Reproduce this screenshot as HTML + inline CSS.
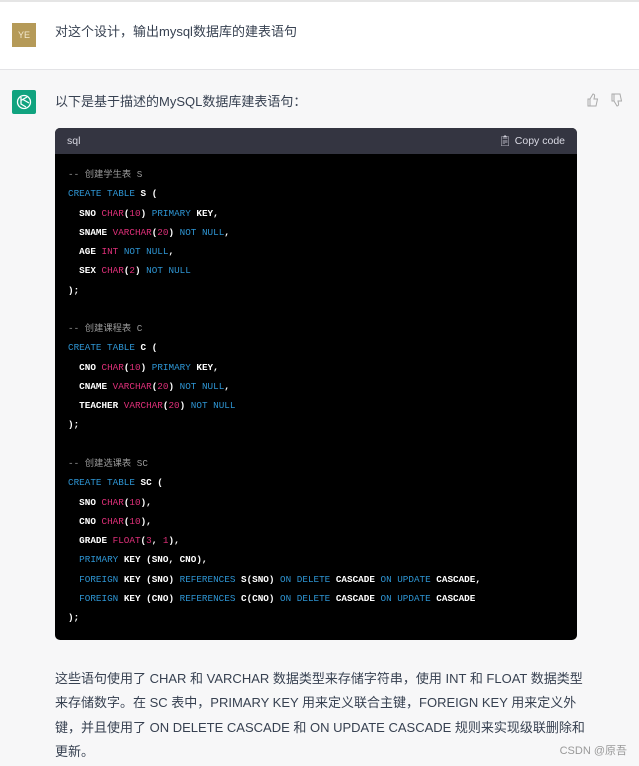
<!DOCTYPE html>
<html><head><meta charset="utf-8"><style>
*{margin:0;padding:0;box-sizing:border-box}
body{width:639px;height:766px;overflow:hidden;font-family:"Liberation Sans","Noto Sans CJK SC",sans-serif;color:#374151;background:#f7f7f8;position:relative}
.top{position:absolute;left:0;top:0;width:639px;height:70px;background:#fff;border-top:2px solid #e5e5e5;border-bottom:1px solid #e3e3e6}
.ye{position:absolute;left:12px;top:21px;width:24px;height:24px;background:#b59a58;color:#f3e9cf;font-size:9px;text-align:center;line-height:24px}
.q{position:absolute;left:55px;top:19px;font-size:13px;color:#374151}
.gpt{position:absolute;left:12px;top:90px;width:24px;height:24px;background:#10a37f;border-radius:2px}
.a1{position:absolute;left:55px;top:91px;font-size:13px}
.code{position:absolute;left:55px;top:128px;width:522px;height:512px;background:#000;border-radius:5px;overflow:hidden}
.hd{height:26px;background:#343541;color:#d9d9e3;font-size:10.5px;line-height:26px;padding-left:12px;position:relative}
.hd span{position:absolute;right:12px;top:0}
pre{font-family:"Liberation Mono",monospace;font-size:9.3px;line-height:19.27px;color:#fff;padding:11px 0 0 13px;font-weight:bold}
.k{color:#2e95d3;font-weight:normal}.t{color:#df3079;font-weight:normal}.c{color:#999;font-weight:normal}
.txt{position:absolute;left:55px;top:667px;width:530px;font-size:13px;line-height:24.3px;color:#374151}
.csdn{position:absolute;right:12px;top:742px;font-size:11px;color:#999}
</style></head><body>
<div class="top"><div class="ye">YE</div><div class="q">对这个设计，输出mysql数据库的建表语句</div></div>
<div class="gpt"><svg width="24" height="24" viewBox="0 0 24 24"><g fill="none" stroke="#fff" stroke-width="1.3"><circle cx="12" cy="12" r="6.5"/><path d="M9 7v7l5 3M15 7l-6 3.5v3M17 13l-6-3.5"/></g></svg></div>
<div class="a1">以下是基于描述的MySQL数据库建表语句：</div>
<svg style="position:absolute;left:586px;top:93px" width="40" height="14" viewBox="0 0 40 14"><g fill="none" stroke="#aaa" stroke-width="1"><path d="M2 6h2v7H2zM4 6l3-5c1 0 2 1 1.5 2.5L8 6h3.5l-1.5 7H4"/><path d="M26 8h2V1h-2zM28 8l3 5c1 0 2-1 1.5-2.5L32 8h3.5L34 1h-6"/></g></svg>
<div class="code"><div class="hd">sql<span>&#x1F4CB;&#xFE0E; Copy code</span></div>
<pre><span class="c">-- 创建学生表 S</span>
<span class="k">CREATE TABLE</span> S (
  SNO <span class="t">CHAR</span>(<span class="t">10</span>) <span class="k">PRIMARY</span> KEY,
  SNAME <span class="t">VARCHAR</span>(<span class="t">20</span>) <span class="k">NOT NULL</span>,
  AGE <span class="t">INT</span> <span class="k">NOT NULL</span>,
  SEX <span class="t">CHAR</span>(<span class="t">2</span>) <span class="k">NOT NULL</span>
);

<span class="c">-- 创建课程表 C</span>
<span class="k">CREATE TABLE</span> C (
  CNO <span class="t">CHAR</span>(<span class="t">10</span>) <span class="k">PRIMARY</span> KEY,
  CNAME <span class="t">VARCHAR</span>(<span class="t">20</span>) <span class="k">NOT NULL</span>,
  TEACHER <span class="t">VARCHAR</span>(<span class="t">20</span>) <span class="k">NOT NULL</span>
);

<span class="c">-- 创建选课表 SC</span>
<span class="k">CREATE TABLE</span> SC (
  SNO <span class="t">CHAR</span>(<span class="t">10</span>),
  CNO <span class="t">CHAR</span>(<span class="t">10</span>),
  GRADE <span class="t">FLOAT</span>(<span class="t">3</span>, <span class="t">1</span>),
  <span class="k">PRIMARY</span> KEY (SNO, CNO),
  <span class="k">FOREIGN</span> KEY (SNO) <span class="k">REFERENCES</span> S(SNO) <span class="k">ON DELETE</span> CASCADE <span class="k">ON UPDATE</span> CASCADE,
  <span class="k">FOREIGN</span> KEY (CNO) <span class="k">REFERENCES</span> C(CNO) <span class="k">ON DELETE</span> CASCADE <span class="k">ON UPDATE</span> CASCADE
);</pre></div>
<div class="txt">这些语句使用了 CHAR 和 VARCHAR 数据类型来存储字符串，使用 INT 和 FLOAT 数据类型来存储数字。在 SC 表中，PRIMARY KEY 用来定义联合主键，FOREIGN KEY 用来定义外键，并且使用了 ON DELETE CASCADE 和 ON UPDATE CASCADE 规则来实现级联删除和更新。</div>
<div class="csdn">CSDN @原吾</div>
</body></html>
